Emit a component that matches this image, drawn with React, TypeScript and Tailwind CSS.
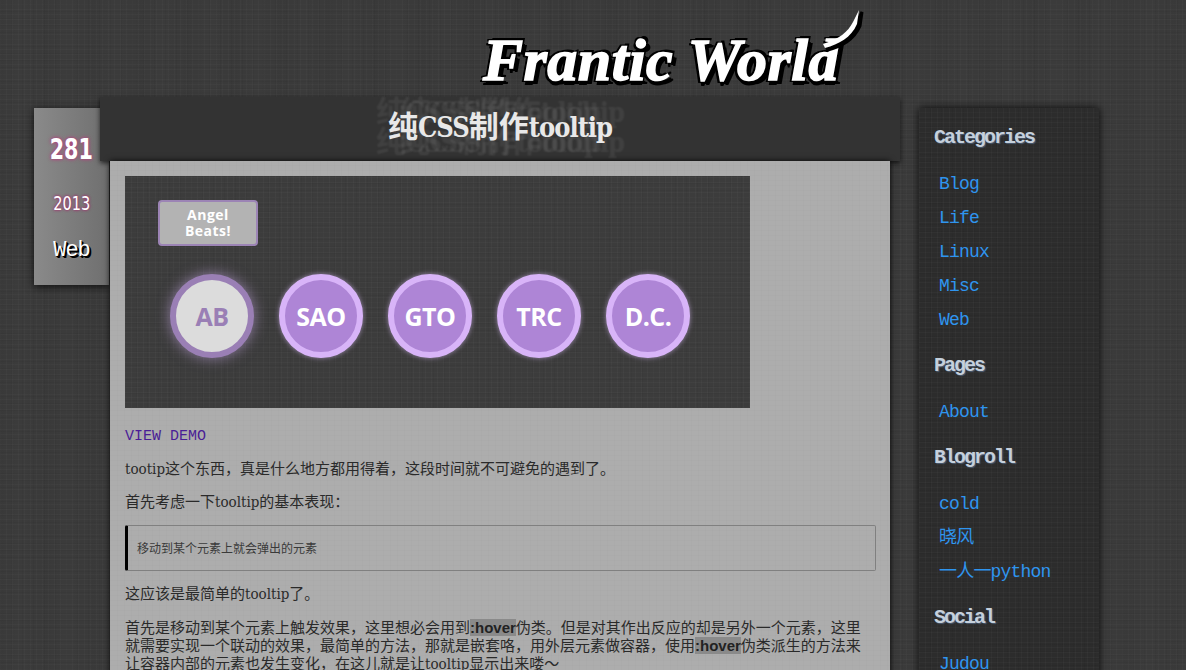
const linen =
  "bg-[repeating-linear-gradient(0deg,rgba(255,255,255,0.025)_0px,rgba(255,255,255,0.025)_1px,transparent_1px,transparent_5px),repeating-linear-gradient(0deg,rgba(0,0,0,0.04)_0px,rgba(0,0,0,0.04)_1px,transparent_1px,transparent_7px),repeating-linear-gradient(90deg,rgba(255,255,255,0.025)_0px,rgba(255,255,255,0.025)_1px,transparent_1px,transparent_6px),repeating-linear-gradient(90deg,rgba(0,0,0,0.04)_0px,rgba(0,0,0,0.04)_1px,transparent_1px,transparent_11px)]";

const linenPage =
  "bg-[repeating-linear-gradient(0deg,rgba(255,255,255,0.02)_0px,rgba(255,255,255,0.02)_1px,transparent_1px,transparent_5px),repeating-linear-gradient(0deg,rgba(0,0,0,0.035)_0px,rgba(0,0,0,0.035)_1px,transparent_1px,transparent_7px),repeating-linear-gradient(90deg,rgba(255,255,255,0.02)_0px,rgba(255,255,255,0.02)_1px,transparent_1px,transparent_6px),repeating-linear-gradient(90deg,rgba(0,0,0,0.035)_0px,rgba(0,0,0,0.035)_1px,transparent_1px,transparent_11px),repeating-linear-gradient(90deg,rgba(0,0,0,0.03)_0px,transparent_20px,rgba(0,0,0,0.03)_47px)]";

const linenLight =
  "bg-[repeating-linear-gradient(0deg,rgba(0,0,0,0.012)_0px,rgba(0,0,0,0.012)_1px,transparent_1px,transparent_5px),repeating-linear-gradient(90deg,rgba(0,0,0,0.012)_0px,rgba(0,0,0,0.012)_1px,transparent_1px,transparent_7px)]";

const slab = "font-['DejaVu_Serif_Condensed','Noto_Sans_CJK_SC',serif]";
const mono = "font-['Liberation_Mono','Noto_Sans_CJK_SC',monospace]";

const circles = ["AB", "SAO", "GTO", "TRC", "D.C."];

const sidebar = [
  { title: "Categories", links: ["Blog", "Life", "Linux", "Misc", "Web"] },
  { title: "Pages", links: ["About"] },
  { title: "Blogroll", links: ["cold", "晓风", "一人一python"] },
  { title: "Social", links: ["Judou"] },
];

const Code = ({ children }: { children: string }) => (
  <code className="bg-[#8a8a8a] font-['Liberation_Sans',sans-serif] text-[15px] font-bold text-[#222]">{children}</code>
);

const Latin = ({ children }: { children: string }) => (
  <span className="text-[27px] tracking-[-1px]">{children}</span>
);

export default function App() {
  return (
    <div className={`h-[670px] w-[1186px] overflow-hidden bg-[#3b3b3b] ${linenPage} ${slab}`}>
      <header className="relative h-[97px] pl-[483px] pt-[27px]">
        <h1 className="font-['Liberation_Serif',serif] text-[60px] font-bold italic leading-[66px] tracking-[0.5px] whitespace-nowrap text-white [-webkit-text-stroke:1.5px_#fff] [text-shadow:3px_3px_0_#000,5px_4px_0_#000,-3px_2px_0_#000,3px_-3px_0_#000,-2px_-2px_0_#000,0_5px_0_#000]">
          Frantic World
        </h1>
        <svg className="absolute left-[815px] top-[6px]" width="50" height="50" viewBox="0 0 50 50">
          <path d="M8 38 C24 33 33 26 38 16 L44 4 L42 18 C36 32 24 38 10 42 Z" fill="#000" transform="translate(3 2)" stroke="#000" strokeWidth="3" />
          <path d="M8 38 C24 33 33 26 38 16 L44 4 L42 18 C36 32 24 38 10 42 Z" fill="#fff" />
        </svg>
      </header>

      <main className="flex items-start pl-[34px]">
        <aside className="mt-[11px] flex h-[177px] w-[75px] shrink-0 flex-col items-center bg-[#7c7c7c] bg-[linear-gradient(90deg,#8a8a8a,#6f6f6f)] shadow-[0_2px_8px_rgba(0,0,0,0.7)]">
          <span className="mt-[24px] inline-block scale-x-[0.82] font-['DejaVu_Sans_Condensed',sans-serif] text-[28px] font-bold leading-[36px] text-white [text-shadow:0_0_5px_#b0457f,0_0_3px_#b0457f]">281</span>
          <span className="mt-[22px] inline-block scale-x-[0.85] font-['DejaVu_Sans_Condensed',sans-serif] text-[19px] leading-[26px] text-white [text-shadow:0_0_3px_#a0326f,0_0_3px_#a0326f]">2013</span>
          <span className={`${mono} mt-[21px] text-[22px] leading-[28px] tracking-[-1px] text-white [text-shadow:1px_1px_0_#000,2px_2px_0_#000]`}>Web</span>
        </aside>

        <div className="z-10 ml-[-9px] w-[800px] shrink-0">
          <h2 className="h-[64px] bg-[#333333] text-center text-[30px] leading-[60px] font-bold text-[#e8e8e8] shadow-[0_2px_5px_rgba(0,0,0,0.7)] [text-shadow:-12px_-15px_2px_rgba(255,255,255,0.07),12px_-15px_2px_rgba(255,255,255,0.07),-12px_15px_2px_rgba(255,255,255,0.07),12px_15px_2px_rgba(255,255,255,0.07)]">
            纯<Latin>CSS</Latin>制作<Latin>tooltip</Latin>
          </h2>
          <article className={`mx-[10px] h-[600px] bg-[#adadad] p-[15px] text-[15px] leading-[18px] text-[#2a2a2a] shadow-[0_0_6px_rgba(0,0,0,0.9)] ${linenLight}`}>
            <div className={`h-[232px] w-[625px] bg-[#3c3c3c] pl-[33px] pt-[24px] ${linen}`}>
              <div className="flex h-[46px] w-[100px] items-center justify-center rounded-[4px] border-2 border-[#9c84b5] bg-[#b3b3b3] text-center font-['Open_Sans',sans-serif] text-[14px] font-bold leading-[16px] tracking-[0.5px] text-white">
                Angel<br />Beats!
              </div>
              <div className="mt-[28px] ml-[12px] flex gap-[25px]">
                {circles.map((c, i) => (
                  <div
                    key={c}
                    className={
                      i === 0
                        ? "flex size-[84px] items-center justify-center rounded-full border-[6px] border-[#9a7fb5] bg-[#dcdcdc] font-['Open_Sans',sans-serif] text-[25px] font-bold tracking-[-0.5px] text-[#9a7fb5] shadow-[0_0_14px_rgba(200,170,230,0.6)]"
                        : "flex size-[84px] items-center justify-center rounded-full border-[6px] border-[#d8b4f8] bg-[#ae85d6] font-['Open_Sans',sans-serif] text-[25px] font-bold tracking-[-0.5px] text-white shadow-[0_0_5px_rgba(220,190,250,0.6)]"
                    }
                  >
                    {c}
                  </div>
                ))}
              </div>
            </div>

            <a className={`${mono} mt-[20px] block text-[15px] leading-[18px] text-[#4a1d96]`}>VIEW DEMO</a>
            <p className="mt-[14px]">tootip这个东西，真是什么地方都用得着，这段时间就不可避免的遇到了。</p>
            <p className="mt-[15px]">首先考虑一下tooltip的基本表现：</p>
            <blockquote className="mt-[14px] mr-[-1px] flex h-[46px] items-center rounded-[2px] border border-l-[3px] border-[#808080] border-l-black pl-[9px] pt-[2px] text-[12px] text-[#3a3a3a]">
              移动到某个元素上就会弹出的元素
            </blockquote>
            <p className="mt-[14px]">这应该是最简单的tooltip了。</p>
            <p className="mt-[16px]">
              首先是移动到某个元素上触发效果，这里想必会用到<Code>:hover</Code>伪类。但是对其作出反应的却是另外一个元素，这里就需要实现一个联动的效果，最简单的方法，那就是嵌套咯，用外层元素做容器，使用<Code>:hover</Code>伪类派生的方法来让容器内部的元素也发生变化，在这儿就是让tooltip显示出来喽～
            </p>
          </article>
        </div>

        <aside className={`mt-[11px] ml-[19px] h-[600px] w-[180px] shrink-0 bg-[#2c2c2c] pl-[15px] pt-[16px] shadow-[0_0_8px_rgba(0,0,0,0.8)] ${linen} ${mono}`}>
          {sidebar.map((s) => (
            <section key={s.title} className="mb-[20px]">
              <h3 className="text-[20px] leading-[28px] font-bold tracking-[-2px] text-[#c5d0dc] [text-shadow:1px_1px_1px_#4a5a70]">{s.title}</h3>
              <ul className="mt-[20px] flex flex-col gap-[10px] pl-[5px]">
                {s.links.map((l) => (
                  <li key={l} className="text-[18px] leading-[24px] tracking-[-0.8px] text-[#2f95ef]">{l}</li>
                ))}
              </ul>
            </section>
          ))}
        </aside>
      </main>
    </div>
  );
}
